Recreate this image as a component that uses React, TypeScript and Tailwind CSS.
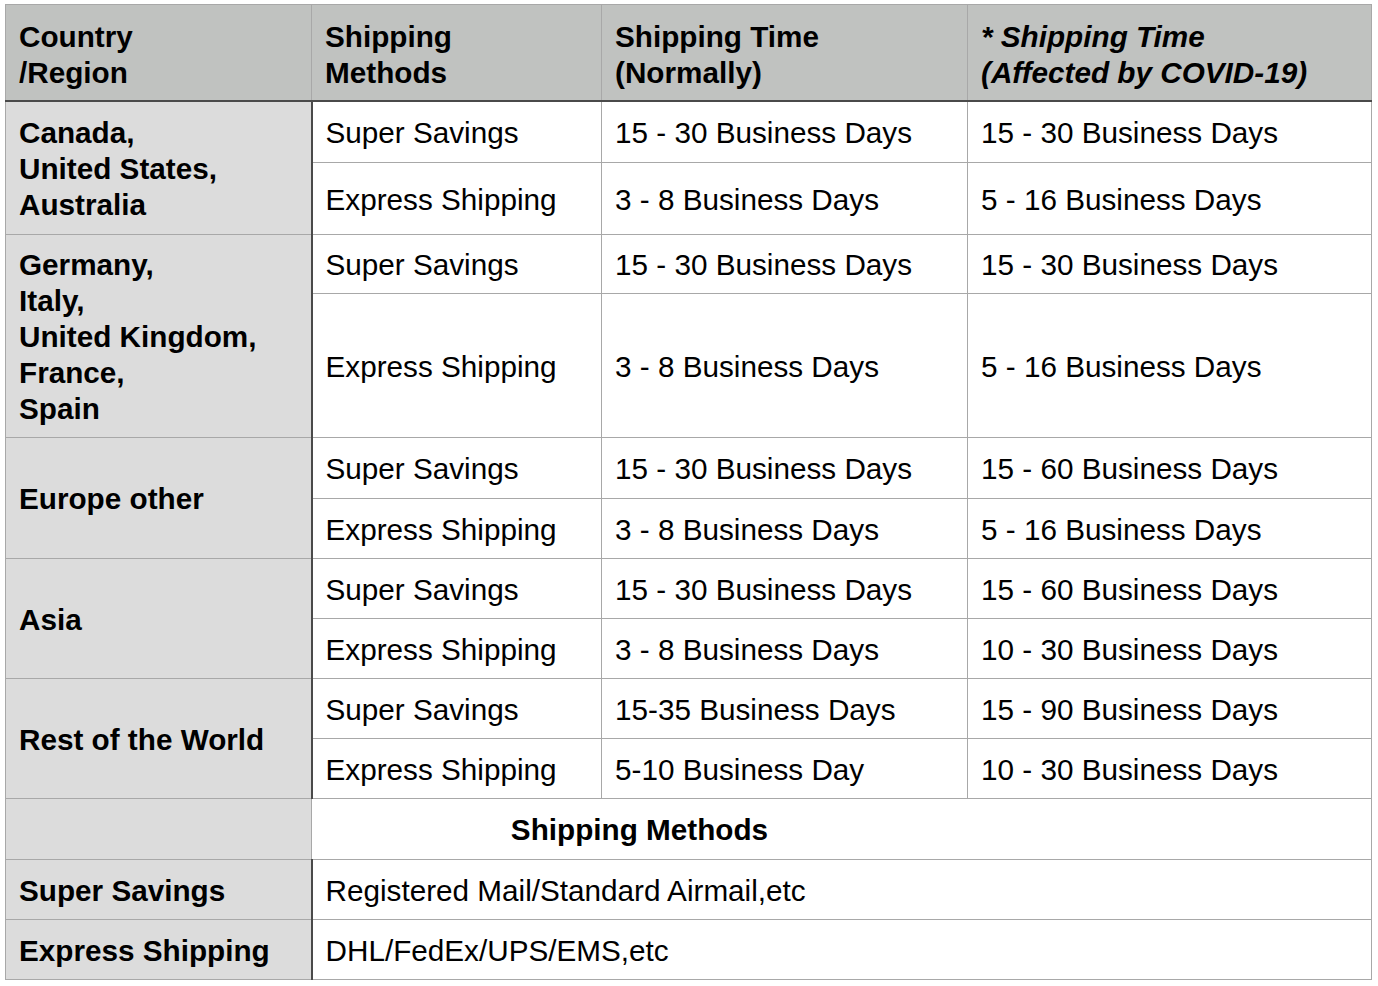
const ROWS = [
  {
    region: ['Canada,', 'United States,', 'Australia'],
    items: [
      { method: 'Super Savings', normal: '15 - 30 Business Days', covid: '15 - 30 Business Days', h: 'h-[62px]' },
      { method: 'Express Shipping', normal: '3 - 8 Business Days', covid: '5 - 16 Business Days', h: 'h-[72px]' },
    ],
  },
  {
    region: ['Germany,', 'Italy,', 'United Kingdom,', 'France,', 'Spain'],
    items: [
      { method: 'Super Savings', normal: '15 - 30 Business Days', covid: '15 - 30 Business Days', h: 'h-[59px]' },
      { method: 'Express Shipping', normal: '3 - 8 Business Days', covid: '5 - 16 Business Days', h: 'h-[144px]' },
    ],
  },
  {
    region: ['Europe other'],
    items: [
      { method: 'Super Savings', normal: '15 - 30 Business Days', covid: '15 - 60 Business Days', h: 'h-[61px]' },
      { method: 'Express Shipping', normal: '3 - 8 Business Days', covid: '5 - 16 Business Days', h: 'h-[60px]' },
    ],
  },
  {
    region: ['Asia'],
    items: [
      { method: 'Super Savings', normal: '15 - 30 Business Days', covid: '15 - 60 Business Days', h: 'h-[60px]' },
      { method: 'Express Shipping', normal: '3 - 8 Business Days', covid: '10 - 30 Business Days', h: 'h-[60px]' },
    ],
  },
  {
    region: ['Rest of the World'],
    items: [
      { method: 'Super Savings', normal: '15-35 Business Days', covid: '15 - 90 Business Days', h: 'h-[60px]' },
      { method: 'Express Shipping', normal: '5-10 Business Day', covid: '10 - 30 Business Days', h: 'h-[60px]' },
    ],
  },
]

const cell = 'border border-[#a8a8a8] pl-[13px] pr-2 pt-[2px] align-middle'
const headCell = 'border border-[#a8a8a8] border-b-2 border-b-[#4a4a4a] pl-[13px] pr-2 pt-[6px] align-middle text-left'
const regionCell =
  'border border-[#a8a8a8] border-r-2 border-r-[#4a4a4a] bg-[#dcdcdc] pl-[13px] pr-2 pt-[2px] align-middle font-bold'

export default function App() {
  return (
    <div
      className="min-h-[986px] w-[1378px] bg-white pl-[5px] pt-[4px] text-[29.7px] leading-[36px] text-black"
      style={{ fontFamily: '"Liberation Sans", Arial, sans-serif' }}
    >
      <table className="w-[1366px] table-fixed border-collapse">
        <colgroup>
          <col className="w-[306px]" />
          <col className="w-[290px]" />
          <col className="w-[366px]" />
          <col className="w-[404px]" />
        </colgroup>
        <thead>
          <tr className="h-[96px] bg-[#c0c2c0] font-bold">
            <th className={headCell}>
              Country
              <br />
              /Region
            </th>
            <th className={headCell}>
              Shipping
              <br />
              Methods
            </th>
            <th className={headCell}>
              Shipping Time
              <br />
              (Normally)
            </th>
            <th className={`${headCell} italic`}>
              * Shipping Time
              <br />
              (Affected by COVID-19)
            </th>
          </tr>
        </thead>
        <tbody>
          {ROWS.map((row) =>
            row.items.map((item, i) => (
              <tr key={row.region[0] + item.method} className={item.h}>
                {i === 0 && (
                  <td rowSpan={row.items.length} className={regionCell}>
                    {row.region.map((line) => (
                      <div key={line}>{line}</div>
                    ))}
                  </td>
                )}
                <td className={cell}>{item.method}</td>
                <td className={cell}>{item.normal}</td>
                <td className={cell}>{item.covid}</td>
              </tr>
            ))
          )}

          {/* Shipping methods legend */}
          <tr className="h-[61px]">
            <td className="border border-[#a8a8a8] bg-[#dcdcdc]" />
            <td colSpan={3} className="border border-[#a8a8a8] pt-[2px] align-middle font-bold">
              <div className="w-[655px] text-center">Shipping Methods</div>
            </td>
          </tr>
          <tr className="h-[60px]">
            <td className={regionCell}>Super Savings</td>
            <td colSpan={3} className={cell}>
              Registered Mail/Standard Airmail,etc
            </td>
          </tr>
          <tr className="h-[60px]">
            <td className={regionCell}>Express Shipping</td>
            <td colSpan={3} className={cell}>
              DHL/FedEx/UPS/EMS,etc
            </td>
          </tr>
        </tbody>
      </table>
    </div>
  )
}
